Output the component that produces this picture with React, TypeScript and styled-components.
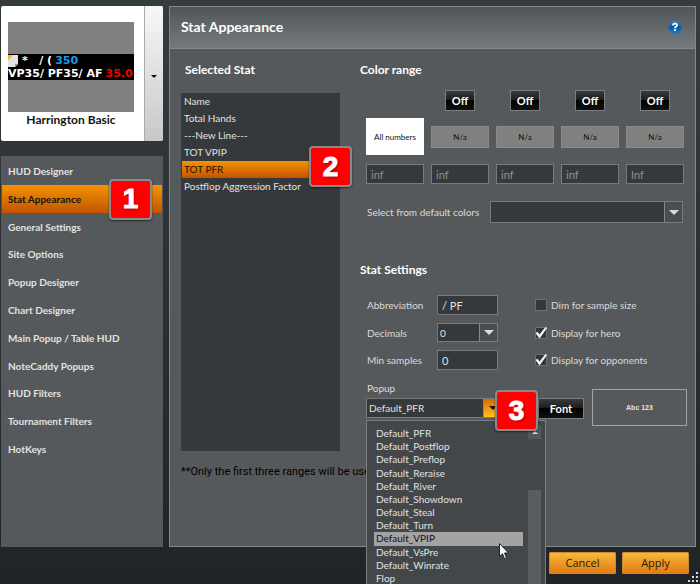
import React from "react";
import styled, { createGlobalStyle, css } from "styled-components";

const ui = `Lato, "Open Sans", sans-serif`;
const segoe = `"Open Sans", "Noto Sans", sans-serif`;
const orange = "linear-gradient(#f59300, #c25400)";

const GlobalStyle = createGlobalStyle`
  *, *::before, *::after { box-sizing: border-box; }
  body { margin: 0; background: #222628; }
  button, input, select { font: inherit; color: inherit; margin: 0; border-radius: 0; }
  ul { list-style: none; margin: 0; padding: 0; }
  h1, h2, p { margin: 0; }
`;

const Window = styled.div`
  position: relative;
  display: flex;
  flex-direction: column;
  min-height: 100vh;
  padding: 6px 4px 0 1px;
  overflow: hidden;
  background: linear-gradient(#363b3d, #202426);
  color: #e2e2e2;
  font: 10px/14px ${ui};
`;

const Columns = styled.div`
  display: flex;
  flex: 1;
  gap: 6px;
`;

const Sidebar = styled.aside`
  display: flex;
  flex-direction: column;
  flex: none;
  width: 162px;
  gap: 15px;
`;

const HudPicker = styled.div`
  display: flex;
  height: 135px;
  border-radius: 2px;
  overflow: hidden;
  background: #fff;
`;

const HudCard = styled.div`
  flex: 1;
  padding: 16px 10px 0 7px;
  color: #111;
  text-align: center;
  font: bold 12px/16px ${ui};
`;

const HudImage = styled.div`
  display: flex;
  flex-direction: column;
  justify-content: center;
  height: 90px;
  background: #808080;
`;

const HudLine = styled.div`
  display: flex;
  align-items: center;
  height: 13px;
  gap: 3px;
  overflow: hidden;
  background: #000;
  color: #fff;
  white-space: pre;
  font: bold 11px/13px "DejaVu Sans", sans-serif;
`;

const Tint = styled.span<{ $color: string }>`
  color: ${(p) => p.$color};
`;

const PickerArrow = styled.button`
  width: 19px;
  padding: 0;
  border: 0;
  border-left: 1px solid #aaa;
  background: linear-gradient(#f8f8f8, #c8c8c8);
  color: #111;
`;

const Nav = styled.nav`
  flex: 1;
  padding: 1px;
  background: #56595b;
`;

const NavList = styled.ul`
  display: grid;
  grid-auto-rows: 1fr;
  height: 306px;
`;

const NavItem = styled.li`
  position: relative;
  display: flex;
`;

const NavLink = styled.a<{ $active?: boolean }>`
  display: flex;
  flex: 1;
  align-items: center;
  padding-left: 6px;
  color: ${(p) => (p.$active ? "#111" : "#e2e2e2")};
  background: ${(p) => (p.$active ? orange : "none")};
  font-weight: bold;
  text-decoration: none;
`;

const Badge = styled.span<{ $top: number; $right: number }>`
  position: absolute;
  z-index: 3;
  top: ${(p) => p.$top}px;
  right: ${(p) => p.$right}px;
  display: flex;
  align-items: center;
  justify-content: center;
  width: 43px;
  height: 41px;
  border: 2px solid #8a8a8a;
  border-radius: 4px;
  background: #fe0000;
  box-shadow: 0 1px 2px #0008;
  color: #fff;
  font: bold 28px/36px "Liberation Sans", Arial, sans-serif;
  text-shadow: 1px 1px 2px #0008;
  -webkit-text-stroke: 1px #fff;
`;

const Panel = styled.main`
  display: flex;
  flex-direction: column;
  flex: 1;
  min-width: 0;
  border: 1px solid #85898b;
  background: #56595c;
`;

const PanelHeader = styled.header`
  display: flex;
  align-items: center;
  justify-content: space-between;
  height: 42px;
  padding: 0 13px 2px 11px;
  border-bottom: 1px solid #85898b;
  background: linear-gradient(#515557, #747a7e);
`;

const Title = styled.h1`
  color: #fff;
  font: bold 14px/20px ${ui};
`;

const HelpButton = styled.button`
  display: flex;
  padding: 0;
  border: 0;
  background: none;
`;

const PanelBody = styled.div`
  display: grid;
  grid-template-columns: 159px 1fr;
  column-gap: 20px;
  padding: 12px 11px 0 11px;
`;

const Heading = styled.h2<{ $indent?: boolean }>`
  padding-left: ${(p) => (p.$indent ? 4 : 0)}px;
  color: #fff;
  font: bold 12px/18px ${ui};
`;

const StatList = styled.ul`
  height: 358px;
  margin-top: 14px;
  padding: 0 1px;
  background: #36393b;
`;

const StatItem = styled.li<{ $active?: boolean }>`
  position: relative;
  height: 17px;
  padding-left: 2px;
  line-height: 16px;
  color: ${(p) => (p.$active ? "#1a1000" : "#e2e2e2")};
  background: ${(p) => (p.$active ? orange : "none")};
`;

const Note = styled.p`
  grid-column: 1 / -1;
  margin-top: 12px;
  color: #000;
  font: 11px/18px Roboto, sans-serif;
`;

const Settings = styled.div`
  min-width: 0;
`;

const Indented = styled.div`
  padding-left: 6px;
`;

const RangeGrid = styled.div`
  display: grid;
  grid-template-columns: repeat(5, 1fr);
  column-gap: 7px;
  align-items: center;
  justify-items: center;
  margin-top: 11px;
`;

const glossy = css`
  border: 1px solid #7b7e80;
  background: linear-gradient(#3a3a3a, #1c1c1c 50%, #000 50%, #111);
  color: #fff;
  font: bold 11px/16px ${ui};
  padding: 0;
`;

const OffButton = styled.button`
  ${glossy}
  width: 30px;
  height: 21px;
`;

const FontButton = styled.button`
  ${glossy}
  width: 46px;
  height: 21px;
`;

const Swatch = styled.button<{ $all?: boolean }>`
  width: 100%;
  height: ${(p) => (p.$all ? 37 : 22)}px;
  margin: ${(p) => (p.$all ? "7px 0 9px" : "0 0 2px")};
  padding: 0;
  border: 1px solid ${(p) => (p.$all ? "#fff" : "#8a8a8a")};
  background: ${(p) => (p.$all ? "#fff" : "#808080")};
  color: #111;
  font: 8px/12px ${ui};
`;

const field = css`
  width: 100%;
  height: 20px;
  border: 1px solid #777b7d;
  background: #36393b;
`;

const TextField = styled.input`
  ${field}
  padding: 0 4px;
  font-size: 11px;
`;

const RangeField = styled(TextField)`
  color: #8f9193;
`;

const ComboBox = styled.div<{ $height: number }>`
  position: relative;
  display: flex;
  width: 100%;
  height: ${(p) => p.$height}px;
`;

const Select = styled.select`
  ${field}
  height: 100%;
  padding: 0 20px 0 2px;
  appearance: none;
  font-size: 10px;
`;

const ComboArrow = styled.span<{ $hot?: boolean }>`
  position: absolute;
  inset: 1px 1px 1px auto;
  display: flex;
  align-items: center;
  justify-content: center;
  width: 18px;
  border-left: 1px solid #85898b;
  background: ${(p) => (p.$hot ? "linear-gradient(#d86a00, #ffc21c)" : "#4a4d50")};
  color: ${(p) => (p.$hot ? "#1a1000" : "#dcdcdc")};
  pointer-events: none;
`;

const DefaultColors = styled.div`
  display: grid;
  grid-template-columns: 124px 1fr;
  align-items: center;
  margin: 17px 1px 38px 0;
`;

const Form = styled.div`
  display: grid;
  grid-template-columns: 71px 61px 1fr;
  align-items: center;
  row-gap: 8px;
  margin-top: 16px;
`;

const FieldLabel = styled.label`
  color: #dadada;
  padding-left: 1px;
  white-space: nowrap;
`;

const CheckLabel = styled(FieldLabel)`
  display: flex;
  align-items: center;
  gap: 4px;
  margin-left: 36px;
`;

const CheckHolder = styled.span`
  position: relative;
  display: flex;
`;

const CheckInput = styled.input`
  width: 12px;
  height: 12px;
  margin: 0;
  appearance: none;
  border: 1px solid #6e7173;
  background: #34373a;
  & + svg { display: none; }
  &:checked + svg { display: block; }
`;

const CheckMark = styled.svg`
  position: absolute;
  top: 0;
  left: 0;
  overflow: visible;
  pointer-events: none;
`;

const PopupField = styled.div`
  position: relative;
  display: flex;
  flex: none;
  flex-direction: column;
  gap: 3px;
  width: 136px;
  padding-bottom: 8px;
`;

const PopupActions = styled.div`
  display: flex;
  flex: none;
  align-items: flex-start;
  gap: 8px;
`;

const PopupLine = styled.div`
  display: flex;
  align-items: flex-end;
  gap: 36px;
  margin-top: 11px;
`;

const FontPreview = styled.div`
  display: flex;
  align-items: center;
  justify-content: center;
  width: 95px;
  height: 37px;
  margin-top: -9px;
  border: 1px solid #a0a2a4;
  font: bold 7px/10px "Liberation Sans", Arial, sans-serif;
`;

const Menu = styled.div`
  position: absolute;
  z-index: 2;
  top: 39px;
  left: 0;
  display: flex;
  gap: 5px;
  width: 180px;
  height: 180px;
  padding: 5px 4px 0 7px;
  border: 1px solid #7b7e80;
  background: #43474a;
`;

const MenuList = styled.ul`
  display: grid;
  grid-auto-rows: 1fr;
  flex: 1;
  height: 158px;
  margin-top: 1px;
`;

const MenuItem = styled.li<{ $active?: boolean }>`
  display: flex;
  align-items: center;
  padding-left: 2px;
  line-height: 13px;
  color: ${(p) => (p.$active ? "#111" : "#e2e2e2")};
  background: ${(p) => (p.$active ? "#a3a3a3" : "none")};
`;

const ScrollBar = styled.div`
  display: flex;
  flex-direction: column;
  justify-content: space-between;
  width: 13px;
`;

const ScrollArrow = styled.button`
  height: 13px;
  padding: 0;
  border: 0;
  display: flex;
  align-items: center;
  justify-content: center;
  background: #54585a;
`;

const ScrollThumb = styled.div`
  height: 109px;
  background: #5a5d60;
`;

const Cursor = styled.svg`
  position: absolute;
  top: 122px;
  left: 132px;
`;

const Footer = styled.footer`
  display: flex;
  justify-content: flex-end;
  gap: 6px;
  padding: 5px 7px 10px 0;
`;

const ActionButton = styled.button`
  width: 67px;
  height: 22px;
  padding: 0;
  border: 1px solid #c98a30;
  border-radius: 1px;
  background: linear-gradient(#f9b73a, #e07c14);
  color: #241a08;
  font: 11px/16px ${segoe};
`;

const Grip = styled.svg`
  position: absolute;
  right: 2px;
  bottom: 2px;
`;

const Down = ({ size = 8 }: { size?: number }) => (
  <svg width={size} height={size / 2} viewBox="0 0 10 5" aria-hidden="true">
    <path d="M0 0h10L5 5z" fill="currentColor" />
  </svg>
);

const NoteIcon = () => (
  <svg width="11" height="13" viewBox="0 0 11 13" aria-hidden="true">
    <path d="M0 1h10v9l-3 3H0z" fill="#e4e4e4" />
    <path d="M7 13v-3h3z" fill="#999" />
    <path d="M0 1h4L3 4 0 6z" fill="#f5b52a" />
  </svg>
);

const Check = ({ label, on }: { label: string; on?: boolean }) => (
  <CheckLabel>
    <CheckHolder>
      <CheckInput type="checkbox" defaultChecked={on} />
      <CheckMark width="12" height="12" viewBox="0 0 12 12" aria-hidden="true">
        <path d="M0.5 6L2.5 4.8L4.5 7.5L10.5 0L12 1L5 11H4z" fill="#f4f4f4" />
      </CheckMark>
    </CheckHolder>
    {label}
  </CheckLabel>
);

const navItems = [
  "HUD Designer", "Stat Appearance", "General Settings", "Site Options", "Popup Designer", "Chart Designer",
  "Main Popup / Table HUD", "NoteCaddy Popups", "HUD Filters", "Tournament Filters", "HotKeys",
];
const stats = ["Name", "Total Hands", "---New Line---", "TOT VPIP", "TOT PFR", "Postflop Aggression Factor"];
const popups = [
  "Default_PFR", "Default_Postflop", "Default_Preflop", "Default_Reraise", "Default_River", "Default_Showdown",
  "Default_Steal", "Default_Turn", "Default_VPIP", "Default_VsPre", "Default_Winrate", "Flop",
];
const ranges = ["inf", "inf", "inf", "inf", "Inf"];

export default function App() {
  return (
    <Window>
      <GlobalStyle />
      <Columns>
        <Sidebar>
          <HudPicker>
            <HudCard>
              <HudImage>
                <HudLine>
                  <NoteIcon />
                  <span>{"*   / ("}</span>
                  <Tint $color="#1c9be6">350</Tint>
                </HudLine>
                <HudLine>
                  <span>VP35/ PF35/ AF</span>
                  <Tint $color="#f00000">35.0</Tint>
                </HudLine>
              </HudImage>
              Harrington Basic
            </HudCard>
            <PickerArrow aria-label="Choose HUD"><Down size={6} /></PickerArrow>
          </HudPicker>
          <Nav>
            <NavList>
              {navItems.map((name) => (
                <NavItem key={name}>
                  <NavLink href="#" $active={name === "Stat Appearance"}>{name}</NavLink>
                  {name === "Stat Appearance" && <Badge $top={-6} $right={10}>1</Badge>}
                </NavItem>
              ))}
            </NavList>
          </Nav>
        </Sidebar>

        <Panel>
          <PanelHeader>
            <Title>Stat Appearance</Title>
            <HelpButton aria-label="Help">
              <svg width="14" height="14" viewBox="0 0 14 14" aria-hidden="true">
                <defs>
                  <linearGradient id="help" x1="0" y1="0" x2="0" y2="1">
                    <stop offset="0" stopColor="#4d8fc4" />
                    <stop offset="0.5" stopColor="#0b5799" />
                    <stop offset="1" stopColor="#1c7fc8" />
                  </linearGradient>
                </defs>
                <circle cx="7" cy="7" r="6.5" fill="url(#help)" stroke="#2a6fa8" />
                <path d="M5 5.4Q5 3.6 7 3.6T9 5.3Q9 6.3 7.9 6.8Q7 7.2 7 8.2" fill="none" stroke="#fff" strokeWidth="1.8" />
                <rect x="6.1" y="9.1" width="1.8" height="1.8" fill="#fff" />
              </svg>
            </HelpButton>
          </PanelHeader>
          <PanelBody>
            <section>
              <Heading $indent>Selected Stat</Heading>
              <StatList>
                {stats.map((name) => (
                  <StatItem key={name} $active={name === "TOT PFR"}>
                    {name}
                    {name === "TOT PFR" && <Badge $top={-15} $right={-13}>2</Badge>}
                  </StatItem>
                ))}
              </StatList>
            </section>
            <Settings>
              <Heading>Color range</Heading>
              <Indented>
                <RangeGrid>
                  <span />
                  {[1, 2, 3, 4].map((n) => <OffButton key={n}>Off</OffButton>)}
                  <Swatch $all>All numbers</Swatch>
                  {[1, 2, 3, 4].map((n) => <Swatch key={n}>N/a</Swatch>)}
                  {ranges.map((value, i) => (
                    <RangeField key={i} defaultValue={value} aria-label={`Range ${i + 1}`} />
                  ))}
                </RangeGrid>
                <DefaultColors>
                  <FieldLabel htmlFor="colors">Select from default colors</FieldLabel>
                  <ComboBox $height={22}>
                    <Select id="colors"><option /></Select>
                    <ComboArrow><Down size={10} /></ComboArrow>
                  </ComboBox>
                </DefaultColors>
              </Indented>
              <Heading>Stat Settings</Heading>
              <Indented>
                <Form>
                  <FieldLabel htmlFor="abbr">Abbreviation</FieldLabel>
                  <TextField id="abbr" defaultValue="/ PF" />
                  <Check label="Dim for sample size" />
                  <FieldLabel htmlFor="dec">Decimals</FieldLabel>
                  <ComboBox $height={19}>
                    <Select id="dec"><option>0</option></Select>
                    <ComboArrow><Down size={10} /></ComboArrow>
                  </ComboBox>
                  <Check label="Display for hero" on />
                  <FieldLabel htmlFor="min">Min samples</FieldLabel>
                  <TextField id="min" defaultValue="0" />
                  <Check label="Display for opponents" on />
                </Form>
                <PopupLine>
                  <PopupField>
                    <FieldLabel htmlFor="popup">Popup</FieldLabel>
                    <ComboBox $height={20}>
                      <Select id="popup"><option>Default_PFR</option></Select>
                      <ComboArrow $hot><Down /></ComboArrow>
                    </ComboBox>
                    <Badge $top={9} $right={-36}>3</Badge>
                    <Menu>
                      <MenuList role="listbox" aria-label="Popup">
                        {popups.map((name) => (
                          <MenuItem key={name} role="option" aria-selected={name === "Default_VPIP"} $active={name === "Default_VPIP"}>
                            {name}
                          </MenuItem>
                        ))}
                      </MenuList>
                      <ScrollBar>
                        <ScrollArrow aria-label="Scroll up">
                          <svg width="6" height="3" viewBox="0 0 6 3" aria-hidden="true"><path d="M3 0l3 3H0z" fill="#dcdcdc" /></svg>
                        </ScrollArrow>
                        <ScrollThumb />
                      </ScrollBar>
                      <Cursor width="10" height="17" viewBox="0 0 10 17" aria-hidden="true">
                        <path d="M.5 .5v13l3-2.8 2 5 2-.8-2-4.9h4z" fill="#fff" stroke="#1b2238" />
                      </Cursor>
                    </Menu>
                  </PopupField>
                  <PopupActions>
                    <FontButton>Font</FontButton>
                    <FontPreview>Abc 123</FontPreview>
                  </PopupActions>
                </PopupLine>
              </Indented>
            </Settings>
            <Note>**Only the first three ranges will be use</Note>
          </PanelBody>
        </Panel>
      </Columns>
      <Footer>
        <ActionButton>Cancel</ActionButton>
        <ActionButton>Apply</ActionButton>
      </Footer>
      <Grip width="10" height="10" viewBox="0 0 10 10" aria-hidden="true">
        <path d="M8 0h2v2H8zM4 4h2v2H4zM8 4h2v2H8zM0 8h2v2H0zM4 8h2v2H4zM8 8h2v2H8z" fill="#d8d8d8" />
      </Grip>
    </Window>
  );
}
